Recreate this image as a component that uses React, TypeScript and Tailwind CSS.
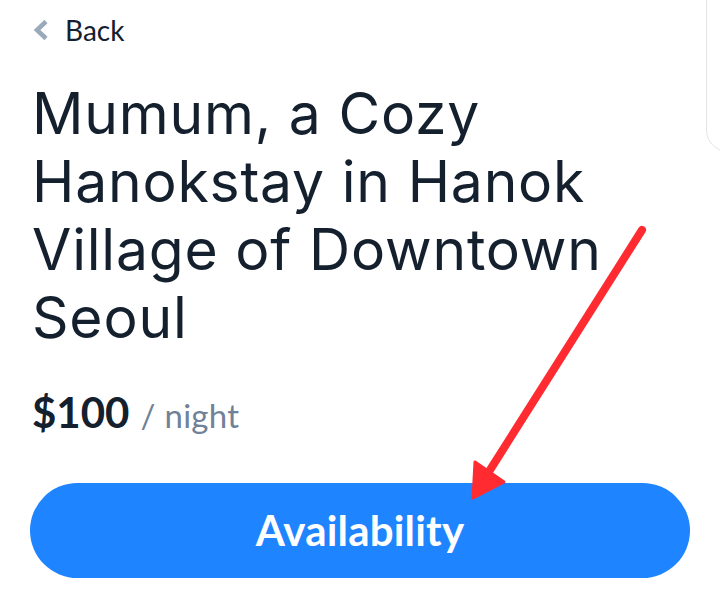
const title = ['Mumum, a Cozy', 'Hanokstay in Hanok', 'Village of Downtown', 'Seoul'];

const App = () => {
    return (
        <div className="relative w-[720px] h-[616px] overflow-hidden bg-white font-['Lato',sans-serif]">
            {/* faint card peeking in from the right */}
            <div className="absolute left-[706px] top-[-20px] w-[60px] h-[172px] rounded-[22px] border border-[#e4e4e4] bg-white" />

            <div className="px-[32px] pt-[12px]">
                {/* Back link */}
                <div className="flex items-center gap-[16px] h-[36px]">
                    <svg width="16" height="22" viewBox="0 0 16 22" className="ml-[1px]">
                        <polyline points="13,2.5 4,11 13,19.5" fill="none" stroke="#9aaab8" strokeWidth="4.5" />
                    </svg>
                    <span className="text-[28px] text-[#14202e] leading-none">Back</span>
                </div>

                {/* Title */}
                <h1 className="mt-[32px] text-[57px] leading-[68px] text-[#14202e] font-['Inter',sans-serif] font-normal tracking-[0.8px]">
                    {title.map((line) => (
                        <div key={line}>{line}</div>
                    ))}
                </h1>

                {/* Price */}
                <div className="mt-[39px] flex items-baseline gap-[11px]">
                    <span className="text-[42px] font-bold text-[#14202e] leading-none">$100</span>
                    <span className="text-[33px] text-[#718298] leading-none tracking-[0.3px]">/ night</span>
                </div>
            </div>

            {/* CTA */}
            <div className="px-[30px] mt-[50px]">
                <button className="w-full h-[95px] rounded-full bg-[#1f84ff] text-white text-[42px] font-bold tracking-[0.2px]">
                    Availability
                </button>
            </div>

            {/* annotation arrow */}
            <svg className="absolute left-0 top-0 pointer-events-none" width="720" height="616">
                <line x1="642" y1="230" x2="490" y2="470" stroke="#ff2b30" strokeWidth="8" strokeLinecap="round" />
                <polygon points="475,462 504,482 473,498" fill="#ff2b30" stroke="#ff2b30" strokeWidth="3" strokeLinejoin="round" />
            </svg>
        </div>
    );
};

export default App;
